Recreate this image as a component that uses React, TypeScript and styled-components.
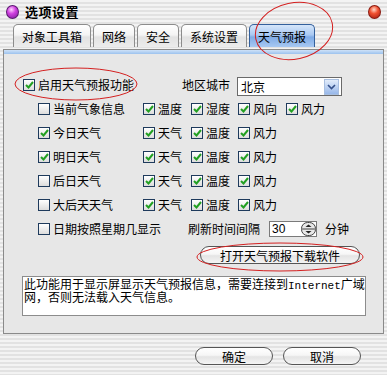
import styled, { createGlobalStyle } from 'styled-components';

const FONT = '"Noto Sans CJK SC", "Noto Sans", sans-serif';

const GlobalStyle = createGlobalStyle`
  html, body {
    margin: 0;
    padding: 0;
    background: #ececec;
  }
  body {
    font-family: ${FONT};
    font-size: 12px;
    color: #000;
  }
`;

const PINSTRIPE = 'repeating-linear-gradient(180deg, #f3f3f3 0px, #f3f3f3 2px, #e2e2e2 2px, #e2e2e2 4px)';

const Window = styled.div`
  position: relative;
  width: 387px;
  height: 375px;
  overflow: hidden;
  display: flex;
  flex-direction: column;
  background: ${PINSTRIPE};
`;

const TitleBar = styled.div`
  height: 23px;
  display: flex;
  align-items: center;
  padding: 0 6px;
  gap: 6px;
`;

const Title = styled.div`
  flex: 1;
  font-size: 13px;
  font-weight: 700;
  line-height: 14px;
  letter-spacing: 0.5px;
`;

const Orb = styled.span<{ $tone: 'purple' | 'red' }>`
  width: 11px;
  height: 12px;
  border-radius: 50%;
  border: 1px solid ${(p) => (p.$tone === 'purple' ? '#5a1870' : '#8a1a10')};
  background: ${(p) =>
    p.$tone === 'purple'
      ? 'radial-gradient(circle at 40% 30%, #ffd0ff 0, #d040e0 40%, #7a1c9a 100%)'
      : 'radial-gradient(circle at 45% 30%, #ffd8c8 0, #f05030 40%, #a01a10 100%)'};
`;

const TabStrip = styled.div`
  display: flex;
  gap: 2px;
  padding: 1px 0 0 13px;
  height: 23px;
`;

const Tab = styled.div<{ $active?: boolean }>`
  height: 23px;
  box-sizing: border-box;
  padding: 1px 8px 0;
  display: flex;
  align-items: center;
  font-size: 12px;
  border: 1px solid ${(p) => (p.$active ? '#34609c' : '#8c8c8c')};
  border-bottom: none;
  border-radius: 5px 5px 0 0;
  background: ${(p) =>
    p.$active
      ? 'linear-gradient(180deg, #d6e6fa 0%, #a9c9f2 45%, #7fabe6 55%, #a7c8f2 100%)'
      : 'linear-gradient(180deg, #ffffff 0%, #f4f4f4 45%, #e2e2e2 55%, #ececec 100%)'};
`;

const Panel = styled.div`
  margin: 2px 3px 0;
  height: 285px;
  box-sizing: border-box;
  border: 1px solid #8a8a8a;
  background: #e7e7e7;
  display: flex;
  flex-direction: column;
`;

const PanelStripe = styled.div`
  height: 4px;
  background: linear-gradient(180deg, #cfe2f8, #9cc2ee);
`;

const PanelBody = styled.div`
  display: flex;
  flex-direction: column;
  padding: 19px 0 17px 19px;
`;

const Row = styled.div<{ $indent?: boolean }>`
  height: 24px;
  display: flex;
  align-items: center;
  padding-left: ${(p) => (p.$indent ? 15 : 0)}px;
`;

const Cell = styled.div<{ $w?: number }>`
  display: flex;
  align-items: center;
  width: ${(p) => (p.$w ? `${p.$w}px` : 'auto')};
  flex-shrink: 0;
`;

const Box = styled.span`
  width: 12px;
  height: 12px;
  box-sizing: border-box;
  border: 1px solid #1e3a5c;
  background: linear-gradient(180deg, #ffffff, #dcdcdc);
  display: inline-flex;
  align-items: center;
  justify-content: center;
  margin-right: 3px;
`;

const Label = styled.span`
  font-size: 12px;
  line-height: 14px;
  white-space: nowrap;
`;

const Check = ({ label, checked = true }: { label: string; checked?: boolean }) => (
  <>
    <Box>
      {checked && (
        <svg width="9" height="8" viewBox="0 0 9 8">
          <path d="M1 4 L3.5 6.5 L8 1" fill="none" stroke="#22a022" strokeWidth="2" />
        </svg>
      )}
    </Box>
    <Label>{label}</Label>
  </>
);

const Select = styled.div`
  width: 105px;
  height: 19px;
  margin: 3px 0 0 7px;
  box-sizing: border-box;
  border: 1px solid #6a6a6a;
  background: #fff;
  display: flex;
  align-items: center;
  padding: 0 2px 0 3px;
`;

const SelectText = styled.span`
  flex: 1;
  font-size: 12px;
`;

const DropButton = styled.span`
  width: 13px;
  height: 14px;
  background: linear-gradient(180deg, #e2ecfa, #98b8ea);
  border: 1px solid #a8bfe0;
  display: flex;
  align-items: center;
  justify-content: center;
`;

const SpinBox = styled.div`
  width: 48px;
  height: 16px;
  margin: 0 8px 0 9px;
  box-sizing: border-box;
  border: 1px solid #7a7a7a;
  background: #fff;
  display: flex;
  align-items: center;
  padding-left: 2px;
`;

const SpinValue = styled.span`
  flex: 1;
  font-family: "Liberation Sans", sans-serif;
  font-size: 12px;
`;

const PillButton = styled.div<{ $w: number }>`
  width: ${(p) => p.$w}px;
  height: 18px;
  box-sizing: border-box;
  border: 1px solid #555;
  border-radius: 9px;
  background: linear-gradient(180deg, #ffffff 0%, #f6f6f6 45%, #e4e4e4 55%, #f4f4f4 100%);
  display: flex;
  align-items: center;
  justify-content: center;
  font-size: 12px;
`;

const ButtonRow = styled.div`
  display: flex;
  padding-left: 177px;
  margin-top: 5px;
`;

const InfoBox = styled.div`
  margin: 12px 0 0 -1px;
  width: 344px;
  height: 40px;
  box-sizing: border-box;
  border: 1px solid #8c8c8c;
  background: #fff;
  padding: 0 0 0 1px;
  overflow: hidden;
`;

const InfoLine = styled.div`
  height: 13px;
  line-height: 13px;
  font-size: 12px;
  white-space: pre;
`;

const Latin = styled.span`
  font-family: "Liberation Mono", monospace;
  font-size: 11px;
`;

const Footer = styled.div`
  flex: 1;
  display: flex;
  justify-content: flex-end;
  align-items: flex-start;
  gap: 10px;
  padding: 13px 26px 0 0;
`;

const Marks = styled.svg`
  position: absolute;
  left: 0;
  top: 0;
  pointer-events: none;
`;

const Chevron = () => (
  <svg width="9" height="6" viewBox="0 0 9 6">
    <path d="M1 1 L4.5 4.5 L8 1" fill="none" stroke="#34508a" strokeWidth="1.6" />
  </svg>
);

const Spinner = () => (
  <svg width="15" height="14" viewBox="0 0 15 14">
    <rect x="0.5" y="0.5" width="14" height="13" rx="6" fill="#e8e8e8" stroke="#444" />
    <line x1="1" y1="7" x2="14" y2="7" stroke="#444" />
    <path d="M4.5 5 L7.5 2.5 L10.5 5 Z" fill="#222" />
    <path d="M4.5 9 L7.5 11.5 L10.5 9 Z" fill="#222" />
  </svg>
);

const DAYS: { name: string; on: boolean }[] = [
  { name: '今日天气', on: true },
  { name: '明日天气', on: true },
  { name: '后日天气', on: false },
  { name: '大后天天气', on: false },
];

export default function App() {
  return (
    <>
      <GlobalStyle />
      <Window>
        <TitleBar>
          <Orb $tone="purple" />
          <Title>选项设置</Title>
          <Orb $tone="red" />
        </TitleBar>
        <TabStrip>
          <Tab>对象工具箱</Tab>
          <Tab>网络</Tab>
          <Tab>安全</Tab>
          <Tab>系统设置</Tab>
          <Tab $active>天气预报</Tab>
        </TabStrip>
        <Panel>
          <PanelStripe />
          <PanelBody>
            <Row>
              <Cell $w={159}>
                <Check label="启用天气预报功能" />
              </Cell>
              <Label>地区城市</Label>
              <Select>
                <SelectText>北京</SelectText>
                <DropButton>
                  <Chevron />
                </DropButton>
              </Select>
            </Row>
            <Row $indent>
              <Cell $w={105}>
                <Check label="当前气象信息" checked={false} />
              </Cell>
              <Cell $w={48}>
                <Check label="温度" />
              </Cell>
              <Cell $w={47}>
                <Check label="湿度" />
              </Cell>
              <Cell $w={48}>
                <Check label="风向" />
              </Cell>
              <Cell>
                <Check label="风力" />
              </Cell>
            </Row>
            {DAYS.map((d) => (
              <Row $indent key={d.name}>
                <Cell $w={105}>
                  <Check label={d.name} checked={d.on} />
                </Cell>
                <Cell $w={48}>
                  <Check label="天气" />
                </Cell>
                <Cell $w={47}>
                  <Check label="温度" />
                </Cell>
                <Cell>
                  <Check label="风力" />
                </Cell>
              </Row>
            ))}
            <Row $indent>
              <Cell $w={150}>
                <Check label="日期按照星期几显示" checked={false} />
              </Cell>
              <Label>刷新时间间隔</Label>
              <SpinBox>
                <SpinValue>30</SpinValue>
                <Spinner />
              </SpinBox>
              <Label>分钟</Label>
            </Row>
            <ButtonRow>
              <PillButton $w={160}>打开天气预报下载软件</PillButton>
            </ButtonRow>
            <InfoBox>
              <InfoLine>
                此功能用于显示屏显示天气预报信息，需要连接到<Latin>Internet</Latin>广域
              </InfoLine>
              <InfoLine>网，否则无法载入天气信息。</InfoLine>
            </InfoBox>
          </PanelBody>
        </Panel>
        <Footer>
          <PillButton $w={78}>确定</PillButton>
          <PillButton $w={78}>取消</PillButton>
        </Footer>
        <Marks width="387" height="375" viewBox="0 0 387 375">
          <g fill="none" stroke="#d42020" strokeWidth="1">
            <ellipse cx="294" cy="31" rx="39" ry="28" transform="rotate(-12 294 31)" />
            <ellipse cx="76" cy="84" rx="61" ry="16" />
            <ellipse cx="280" cy="257" rx="83" ry="14" />
          </g>
        </Marks>
      </Window>
    </>
  );
}
